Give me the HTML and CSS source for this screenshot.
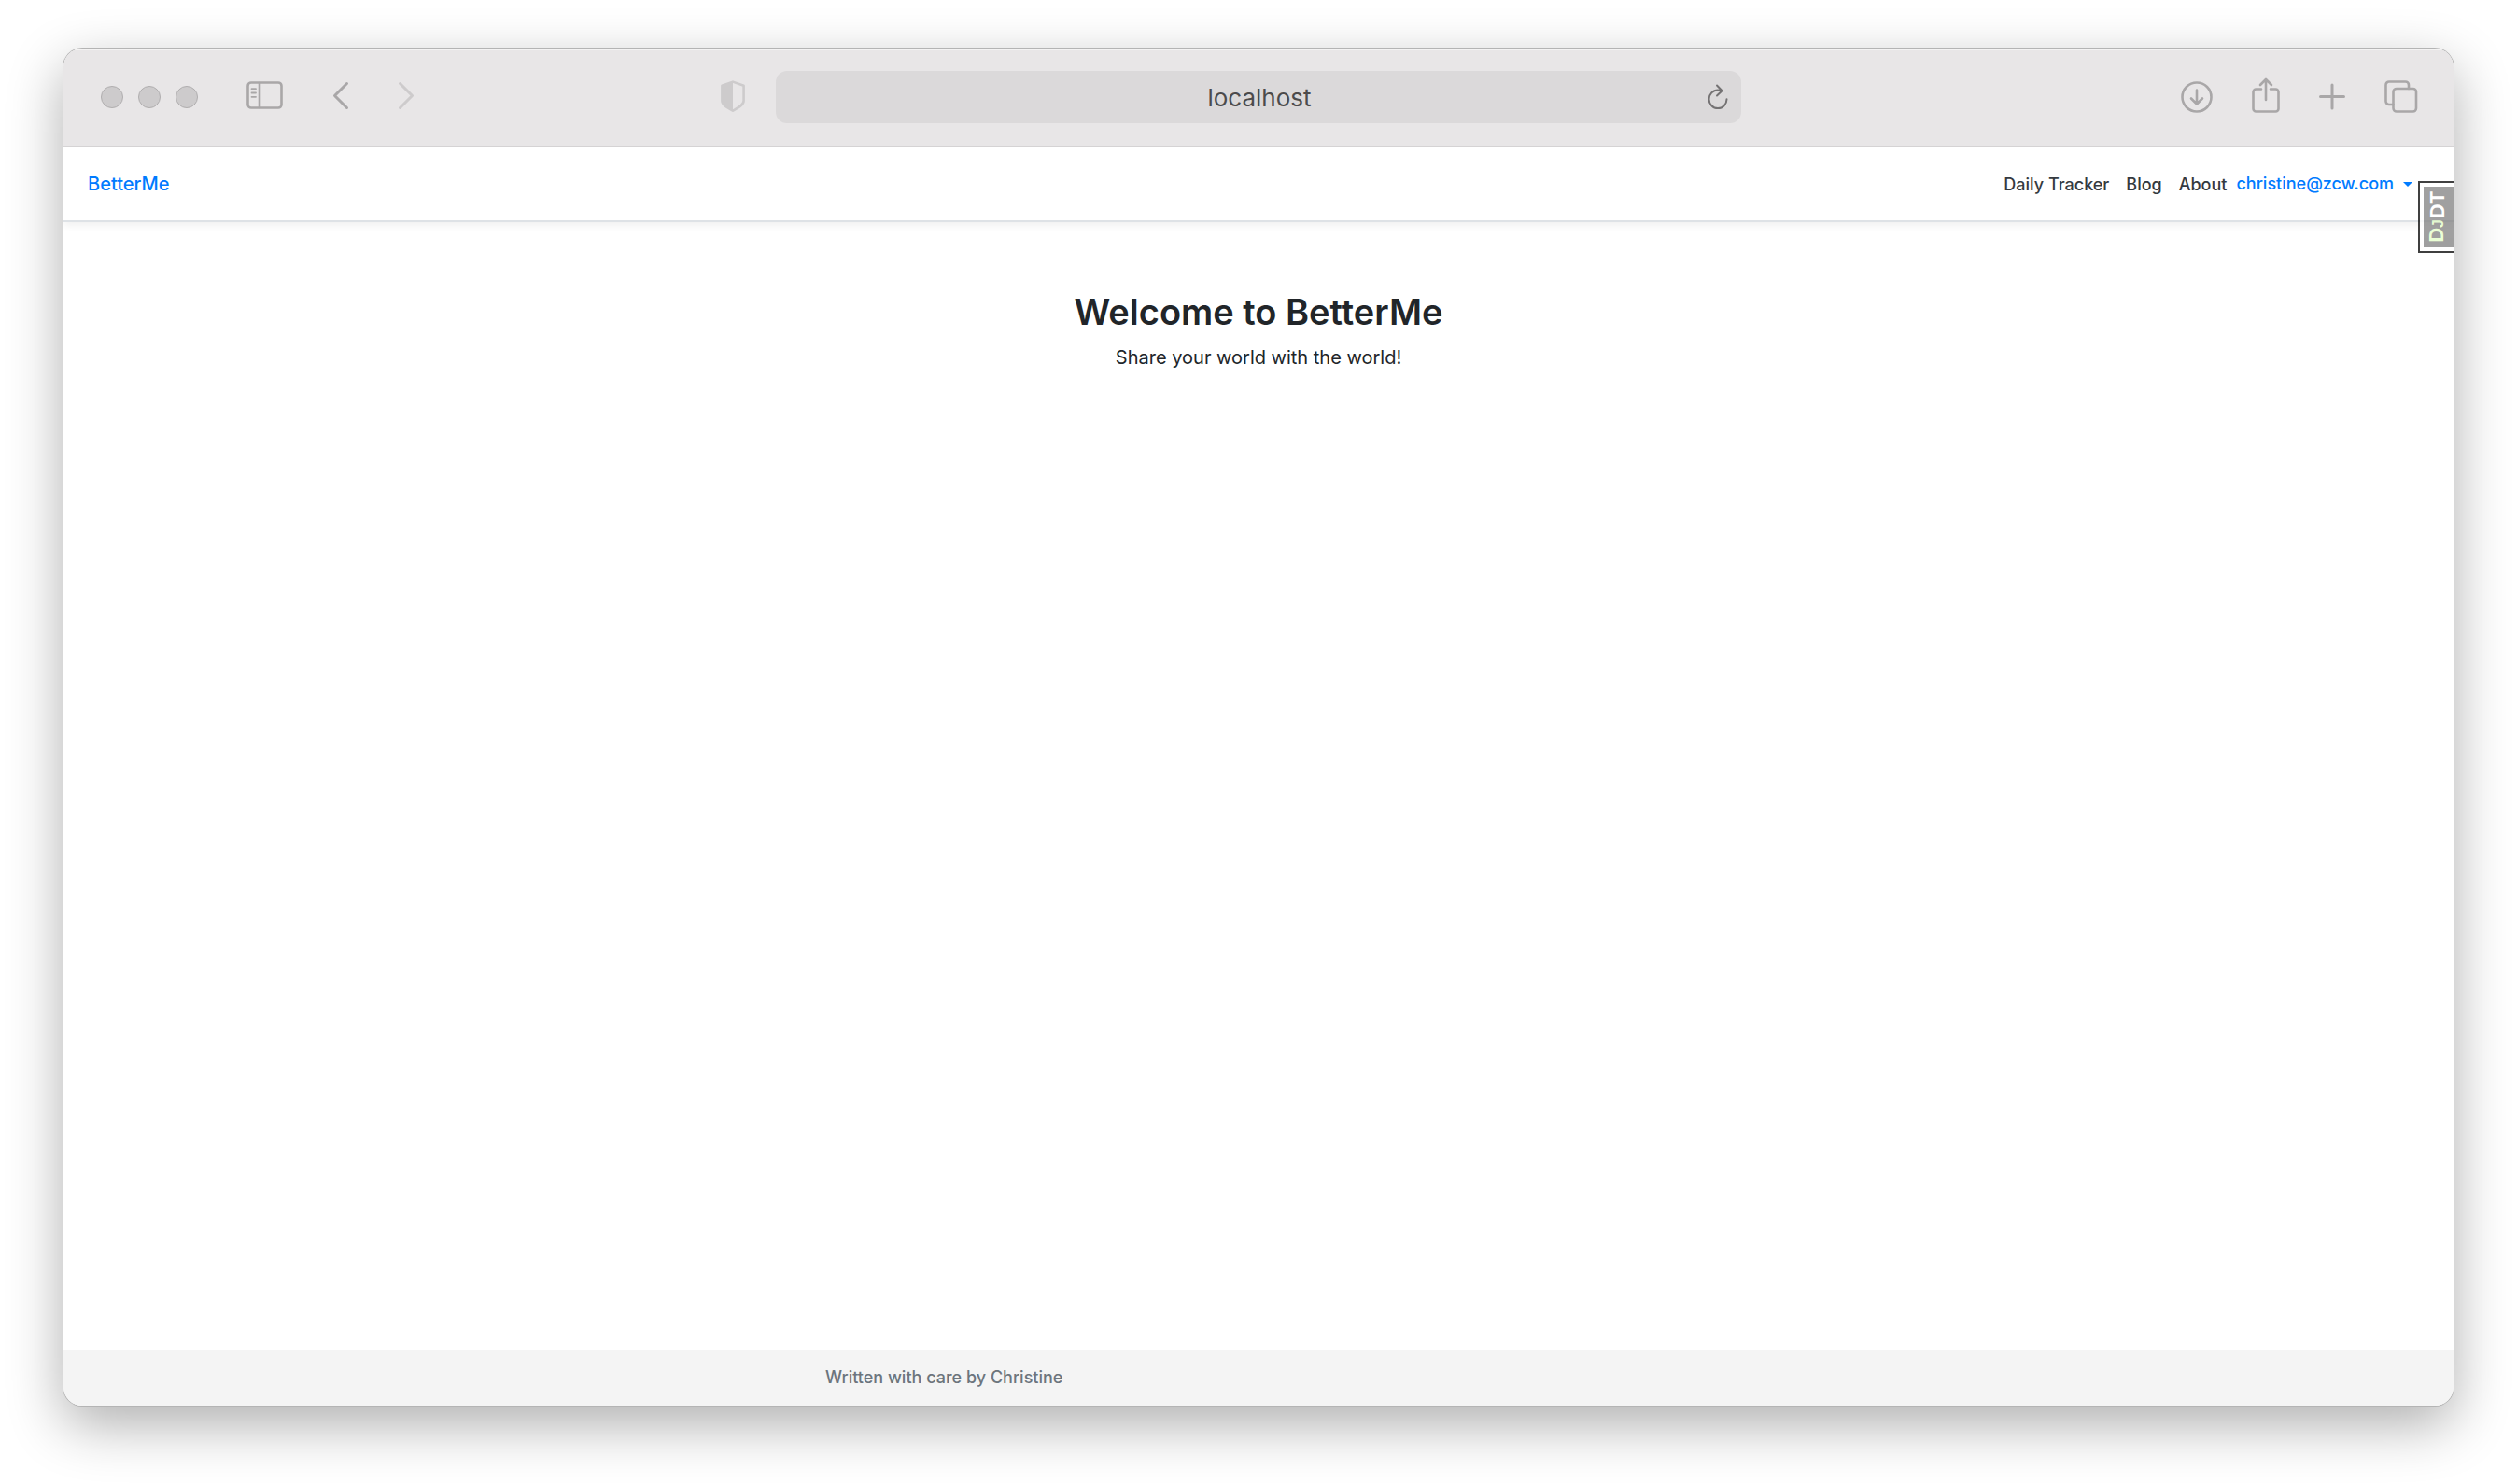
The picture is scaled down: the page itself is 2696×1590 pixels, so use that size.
FILE: index.html
```html
<!DOCTYPE html>
<html lang="en">
<head>
<meta charset="utf-8">
<meta name="viewport" content="width=device-width, initial-scale=1">
<title>BetterMe</title>
<link rel="stylesheet" href="styles.css">
</head>
<body>
<div class="window">
  <header class="toolbar">
    <div class="toolbar-left">
      <div class="lights"><span class="light"></span><span class="light"></span><span class="light"></span></div>
      <button class="tool sidebar-tool" aria-label="Show sidebar">
        <svg width="40" height="34" viewBox="0 0 40 34"><rect x="1.500" y="1.500" width="36" height="27" rx="3.500"/><path d="M14 2v26"/><path class="thin" d="M5.500 8.200h4.500M5.500 12.500h4.500M5.500 16.800h4.500"/></svg>
      </button>
      <button class="tool back-tool" aria-label="Back">
        <svg width="18" height="34" viewBox="0 0 18 34"><path class="bold" d="M15.500 2.500 2.500 15.500l13 13"/></svg>
      </button>
      <button class="tool forward-tool" aria-label="Forward" disabled>
        <svg width="18" height="34" viewBox="0 0 18 34"><path class="bold" d="m2.500 2.500 13 13-13 13"/></svg>
      </button>
    </div>
    <div class="toolbar-center">
      <button class="tool shield-tool" aria-label="Privacy report">
        <svg width="28" height="36" viewBox="0 0 28 36"><path d="M14 1.600 25.600 5.800V22c0 4.500-6 7.500-11.600 10.600C8.400 29.500 2.400 26.500 2.400 22V5.800z"/><path class="solid" d="M14 1.600V32.600C8.400 29.500 2.400 26.500 2.400 22V5.800z"/></svg>
      </button>
      <div class="address">
        <input class="address-input" type="text" value="localhost" aria-label="Address">
        <button class="reload" aria-label="Reload">
          <svg width="22" height="28" viewBox="0 0 22 28"><path d="M14.500 7.200C13.500 6.800 12.300 6.500 11 6.500A9.500 9.800 0 1 0 20.500 16.300M10 1.500l5.500 5.700-5.500 5.300"/></svg>
        </button>
      </div>
    </div>
    <div class="toolbar-right">
      <button class="tool" aria-label="Downloads">
        <svg width="34" height="38" viewBox="0 0 34 38"><circle cx="17" cy="21" r="15.500"/><path d="M17 13.500v14.500M11 22.500l6 6 6-6"/></svg>
      </button>
      <button class="tool" aria-label="Share">
        <svg width="30" height="38" viewBox="0 0 30 38"><path d="M10 12.500H4.500a3 3 0 0 0-3 3V33.500a3 3 0 0 0 3 3h21a3 3 0 0 0 3-3V15.500a3 3 0 0 0-3-3H20M15 24V2M9 8l6-6 6 6"/></svg>
      </button>
      <button class="tool" aria-label="New tab">
        <svg width="28" height="38" viewBox="0 0 28 38"><path class="bold" d="M14 8v25M1.500 20.500h25"/></svg>
      </button>
      <button class="tool" aria-label="Tab overview">
        <svg width="36" height="38" viewBox="0 0 36 38"><rect x="9.500" y="12" width="24.500" height="24.500" rx="3.500"/><path d="M9.500 29H5a3.500 3.500 0 0 1-3.500-3.500V8A3.500 3.500 0 0 1 5 4.500h17.500A3.500 3.500 0 0 1 26 8v4"/></svg>
      </button>
    </div>
  </header>
  <nav class="navbar">
    <a class="brand" href="#">BetterMe</a>
    <div class="links">
      <a class="link" href="#">Daily Tracker</a>
      <a class="link" href="#">Blog</a>
      <a class="link" href="#">About</a>
    </div>
    <button class="account">christine@zcw.com<span class="caret"></span></button>
  </nav>
  <main class="main">
    <h1 class="title">Welcome to BetterMe</h1>
    <p class="lead">Share your world with the world!</p>
  </main>
  <footer class="footer">
    <div class="container">Written with care by Christine</div>
  </footer>
  <button class="debug"><span class="debug-label"><span class="debug-accent">D<small class="debug-small">J</small></span>DT</span></button>
</div>
</body>
</html>
```
FILE: styles.css
```css
* { box-sizing: border-box; }

body {
  margin: 0;
  padding: 52px 68px 84px;
  background: #fff;
  color: #212529;
  font: 400 20px/30px Inter, "Liberation Sans", sans-serif;
}

button { padding: 0; border: 0; background: none; font: inherit; }
svg { display: block; }
a { text-decoration: none; }

.window {
  position: relative;
  display: flex;
  flex-direction: column;
  min-height: calc(100vh - 136px);
  border-radius: 20px;
  overflow: hidden;
  background: #fff;
  box-shadow: 0 0 0 1px #b4b4b4, 0 20px 60px rgba(0, 0, 0, .32);
}

/* Browser toolbar */
.toolbar {
  display: grid;
  grid-template-columns: 1fr 1154px 1fr;
  height: 106px;
  padding: 0 38px;
  border-bottom: 2px solid #d6d4d5;
  background: #e8e6e7;
  box-shadow: inset 0 2px #f4f3f3;
}

.toolbar-left, .toolbar-center, .toolbar-right { display: flex; align-items: center; }
.toolbar-left { padding-left: 2px; }
.toolbar-right { justify-content: flex-end; gap: 42px; padding-bottom: 4px; }
.lights { display: flex; gap: 16px; }

.light {
  width: 24px;
  height: 24px;
  border: 1px solid #b0aeaf;
  border-radius: 50%;
  background: #cdcbcc;
}

.tool svg, .reload svg {
  fill: none;
  stroke: #a9a7a8;
  stroke-width: 2.6;
  stroke-linecap: round;
  stroke-linejoin: round;
}

.tool .thin { stroke-width: 1.8; }
.tool .bold { stroke-width: 3; }
.sidebar-tool, .back-tool, .forward-tool { margin-left: 52px; }
.forward-tool svg, .shield-tool svg { stroke: #cdcbcc; }
.shield-tool .solid { fill: #cdcbcc; stroke: none; }
.toolbar-center { gap: 32px; padding-right: 60px; }

.address {
  display: flex;
  flex: 1;
  align-items: center;
  height: 56px;
  padding: 0 14px 0 38px;
  border-radius: 12px;
  background: #dbd9da;
}

.address-input {
  flex: 1;
  min-width: 0;
  padding: 2px 0 0;
  border: 0;
  background: none;
  color: #4c4b4c;
  font: 400 26px/32px Inter, "Liberation Sans", sans-serif;
  text-align: center;
}

.reload svg { stroke: #747273; stroke-width: 2; }

/* Site */
.navbar {
  display: flex;
  align-items: center;
  height: 80px;
  padding: 0 44px 0 26px;
  border-bottom: 2px solid #dee2e6;
  box-shadow: 0 4px 8px rgba(0, 0, 0, .06);
  font-size: 18px;
  font-weight: 500;
}

.brand { margin-right: auto; color: #007bff; font-size: 20px; }
.links { display: flex; gap: 18px; padding-top: 2px; }
.link { color: #343a40; }
.account { display: flex; align-items: center; gap: 10px; margin-left: 10px; color: #007bff; }

.caret {
  border-top: 5px solid;
  border-right: 5px solid transparent;
  border-left: 5px solid transparent;
}

.main { flex: 1; padding: 72px 16px 48px; text-align: center; }
.title { margin: 0 0 10px; font-size: 38px; line-height: 48px; font-weight: 600; }
.lead { margin: 0; }
.footer { padding: 15px 0; background: #f4f4f4; color: #6c757d; font-size: 18px; font-weight: 500; }
.container { max-width: 960px; margin: 0 auto; padding: 0 16px; }

/* Debug toolbar handle pinned over the page edge */
.debug {
  position: absolute;
  top: 142px;
  right: 0;
  width: 38px;
  height: 77px;
  padding: 4px 0 4px 4px;
  border: 2px solid #000;
  border-right: 0;
  background: #fff;
  opacity: .75;
}

.debug-label {
  display: flex;
  align-items: center;
  justify-content: center;
  width: 100%;
  height: 100%;
  padding-right: 2px;
  background: #808080;
  color: #fff;
  font: 700 22px/28px "Liberation Sans", sans-serif;
  writing-mode: sideways-lr;
}

.debug-accent { color: #e4ffc8; }
.debug-small { font-size: 16px; }
```
